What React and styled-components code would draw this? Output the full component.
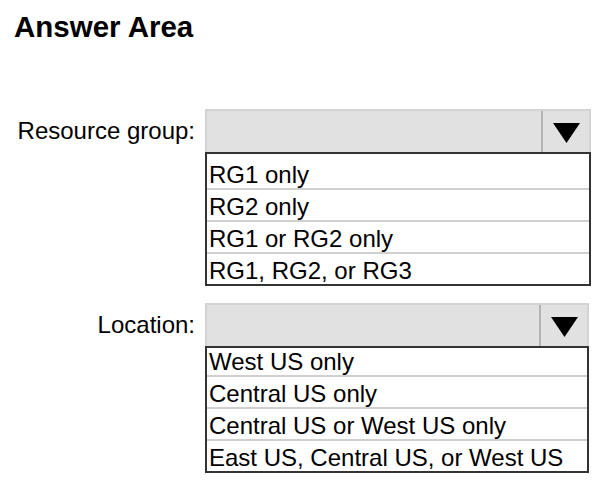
import React from 'react'
import styled, { createGlobalStyle } from 'styled-components'

const Global = createGlobalStyle`
    html, body {
        margin: 0;
        padding: 0;
        background: #fff;
    }
    body {
        font-family: "Liberation Sans", Arial, sans-serif;
        color: #000;
    }
`;

const Page = styled.section`
    width: 603px;
    height: 480px;
    padding-top: 10px;
    box-sizing: border-box;
    overflow: hidden;
`;

const Title = styled.h1`
    margin: 0 0 65px 14px;
    font-size: 29.5px;
    font-weight: bold;
    line-height: 34px;
`;

const Form = styled.div`
    display: grid;
    grid-template-columns: 195px auto;
    column-gap: 10px;
    row-gap: 17px;
    align-items: start;
`;

const Label = styled.div`
    height: 43px;
    display: flex;
    align-items: center;
    justify-content: flex-end;
    font-size: 24px;
    padding-top: 1px;
    box-sizing: border-box;
`;

const Dropdown = styled.div`
    width: ${p => p.$width}px;
    display: flex;
    flex-direction: column;
`;

const Select = styled.div`
    height: 43px;
    box-sizing: border-box;
    display: flex;
    background: #e1e1e1;
    border: 2px solid #d3d3d3;
    border-bottom: none;
`;

const Value = styled.div`
    flex: 1;
`;

const Arrow = styled.div`
    width: 48px;
    border-left: 2px solid #b3b3b3;
    display: flex;
    align-items: center;
    justify-content: center;
    padding-top: 3px;
    box-sizing: border-box;
`;

const List = styled.ul`
    margin: 0;
    padding: 0;
    list-style: none;
    border: 2px solid #333;
`;

const Option = styled.li`
    font-size: 24px;
    line-height: 27px;
    padding: 3px 0 0 2px;
    border-top: 2px solid #d0d0d0;
    white-space: nowrap;
    &:first-child {
        border-top: none;
        padding-top: ${p => p.$firstPad}px;
    }
`;

const fields = [
    {
        label: 'Resource group:',
        width: 386,
        firstPad: 7,
        options: ['RG1 only', 'RG2 only', 'RG1 or RG2 only', 'RG1, RG2, or RG3'],
    },
    {
        label: 'Location:',
        width: 384,
        firstPad: 0,
        options: ['West US only', 'Central US only', 'Central US or West US only', 'East US, Central US, or West US'],
    },
];

const App = () => {
    return (
        <Page>
            <Global />
            <Title>Answer Area</Title>
            <Form>
                {fields.map(f => (
                    <React.Fragment key={f.label}>
                        <Label>{f.label}</Label>
                        <Dropdown $width={f.width}>
                            <Select>
                                <Value />
                                <Arrow>
                                    <svg width="27" height="20" viewBox="0 0 27 20">
                                        <polygon points="0,0 27,0 13.5,20" fill="#000" />
                                    </svg>
                                </Arrow>
                            </Select>
                            <List>
                                {f.options.map(o => (
                                    <Option key={o} $firstPad={f.firstPad}>{o}</Option>
                                ))}
                            </List>
                        </Dropdown>
                    </React.Fragment>
                ))}
            </Form>
        </Page>
    )
}

export default App
